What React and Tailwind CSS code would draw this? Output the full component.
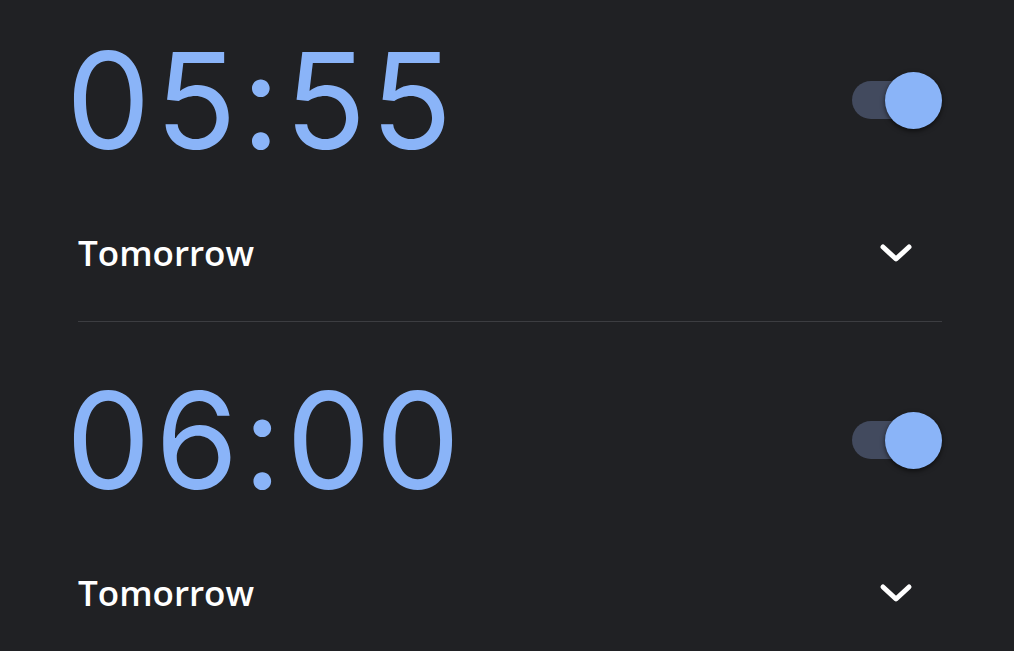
const alarms = [
  { time: "05:55", label: "Tomorrow" },
  { time: "06:00", label: "Tomorrow" },
];

function Toggle() {
  return (
    <div className="relative w-[92px] h-[60px] flex items-center">
      <div className="ml-[2px] w-[72px] h-[38px] rounded-full bg-[#424a5e]" />
      <div className="absolute right-0 top-[2px] w-[57px] h-[57px] rounded-full bg-[#8ab4f8] shadow-[0_2px_5px_rgba(0,0,0,0.6)]" />
    </div>
  );
}

function Chevron() {
  return (
    <svg width="36" height="24" viewBox="0 0 36 24" className="mr-[28px]">
      <polyline points="5,6 18,18 31,6" fill="none" stroke="white" strokeWidth="5" strokeLinecap="round" strokeLinejoin="round" />
    </svg>
  );
}

export default function App() {
  return (
    <div className="w-[1014px] h-[651px] overflow-hidden bg-[#202124] pl-[66px] pr-[72px]" style={{ fontFamily: "'Open Sans', 'Noto Sans', sans-serif" }}>
      {alarms.map((a, i) => (
        <div key={i}>
          {i > 0 && <div className="ml-[12px] mt-[15px] h-px bg-[#3c3d41]" />}
          <div className={`flex items-center justify-between ${i === 0 ? "h-[200px]" : "h-[236px]"}`}>
            <span className="font-[Inter,sans-serif] text-[134px] leading-none text-[#8ab4f8] tracking-[0.035em] font-normal">{a.time}</span>
            <Toggle />
          </div>
          <div className={`flex items-center justify-between pl-[12px] ${i === 0 ? "h-[106px]" : "h-[70px]"}`}>
            <span className="text-[35px] font-semibold text-white">{a.label}</span>
            <Chevron />
          </div>
        </div>
      ))}
    </div>
  );
}
